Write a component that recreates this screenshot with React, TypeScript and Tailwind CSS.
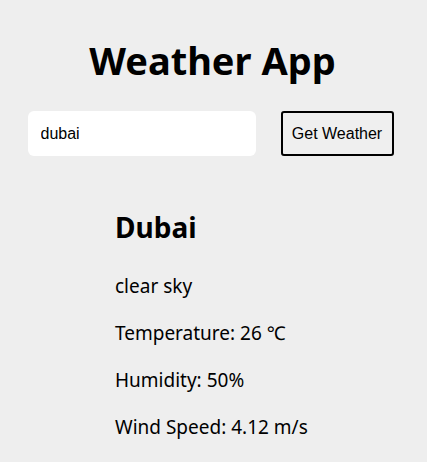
const App = () => {
    return (
        <main
            className="min-h-screen bg-[#eeeeee] text-black flex flex-col items-center"
            style={{ fontFamily: '"Noto Sans", "Open Sans", sans-serif' }}
        >
            {/* Title */}
            <h1 className="mt-[34px] ml-[-2px] text-[38px] leading-[52px] font-bold">Weather App</h1>

            {/* Search row */}
            <div className="mt-[25px] mr-[6px] flex items-center gap-[25px]">
                <input
                    type="text"
                    defaultValue="dubai"
                    className="w-[228px] h-[45px] rounded-[6px] bg-white px-[13px] text-[16px] outline-none"
                    style={{ fontFamily: '"Liberation Sans", Arial, sans-serif' }}
                />
                <button
                    className="w-[113px] h-[45px] rounded-[3px] border-2 border-black bg-[#efefef] text-[16px]"
                    style={{ fontFamily: '"Liberation Sans", Arial, sans-serif' }}
                >
                    Get Weather
                </button>
            </div>

            {/* Weather info */}
            <div className="mt-[52px] w-[197px]">
                <h2 className="text-[28px] leading-[38px] font-bold">Dubai</h2>
                <div className="mt-[26px] flex flex-col gap-[19px] text-[19px] leading-[28px]">
                    <p>clear sky</p>
                    <p>Temperature: 26 ℃</p>
                    <p>Humidity: 50%</p>
                    <p>Wind Speed: 4.12 m/s</p>
                </div>
            </div>
        </main>
    );
};

export default App;
